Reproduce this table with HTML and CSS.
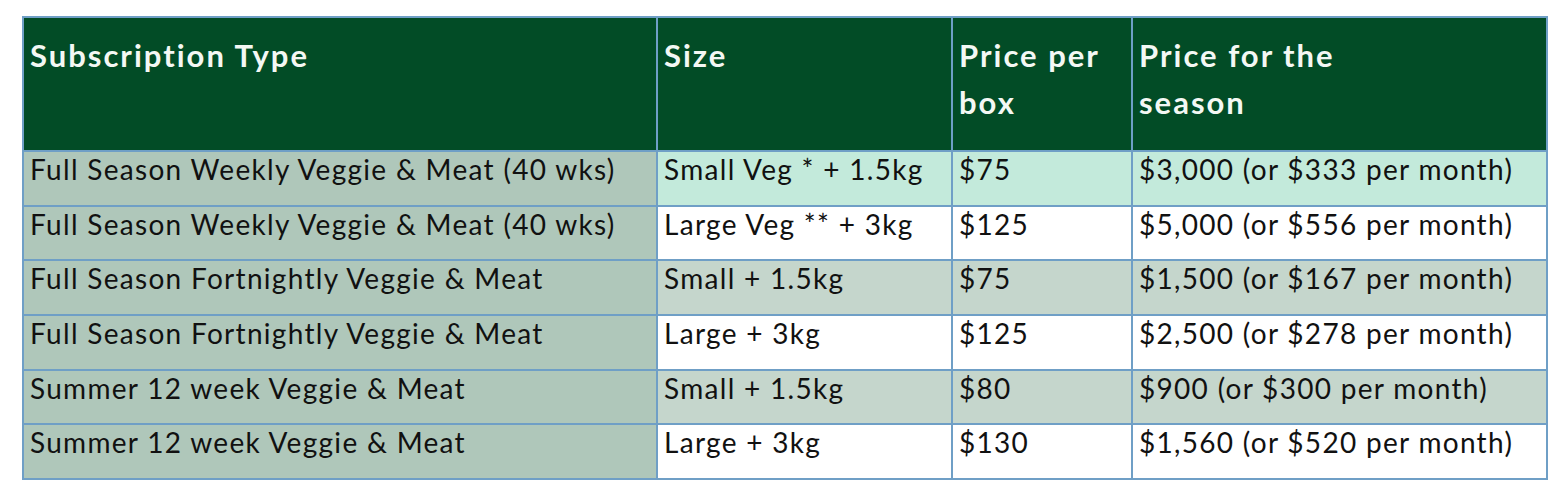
FILE: index.html
```html
<!DOCTYPE html>
<html>
<head>
<meta charset="utf-8">
<link rel="stylesheet" href="styles.css">
</head>
<body>
<div class="wrap">
<table class="plans">
  <colgroup>
    <col class="c1"><col class="c2"><col class="c3"><col class="c4">
  </colgroup>
  <thead>
    <tr class="head">
      <th>Subscription Type</th>
      <th>Size</th>
      <th>Price per<br>box</th>
      <th>Price for the<br>season</th>
    </tr>
  </thead>
  <tbody>
    <tr class="mint">
      <td class="type">Full Season Weekly Veggie &amp; Meat (40 wks)</td>
      <td>Small Veg * + 1.5kg</td>
      <td>$75</td>
      <td>$3,000 (or $333 per month)</td>
    </tr>
    <tr class="white">
      <td class="type">Full Season Weekly Veggie &amp; Meat (40 wks)</td>
      <td>Large Veg ** + 3kg</td>
      <td>$125</td>
      <td>$5,000 (or $556 per month)</td>
    </tr>
    <tr class="grey">
      <td class="type">Full Season Fortnightly Veggie &amp; Meat</td>
      <td>Small + 1.5kg</td>
      <td>$75</td>
      <td>$1,500 (or $167 per month)</td>
    </tr>
    <tr class="white">
      <td class="type">Full Season Fortnightly Veggie &amp; Meat</td>
      <td>Large + 3kg</td>
      <td>$125</td>
      <td>$2,500 (or $278 per month)</td>
    </tr>
    <tr class="grey">
      <td class="type">Summer 12 week Veggie &amp; Meat</td>
      <td>Small + 1.5kg</td>
      <td>$80</td>
      <td>$900 (or $300 per month)</td>
    </tr>
    <tr class="white">
      <td class="type">Summer 12 week Veggie &amp; Meat</td>
      <td>Large + 3kg</td>
      <td>$130</td>
      <td>$1,560 (or $520 per month)</td>
    </tr>
  </tbody>
</table>
</div>
</body>
</html>
```
FILE: styles.css
```css
html, body {
  margin: 0;
  padding: 0;
  background: #ffffff;
}
.wrap {
  padding: 16px 0 0 22px;
}
.plans {
  border-collapse: collapse;
  table-layout: fixed;
  width: 1524px;
  font-family: Lato, "Liberation Sans", sans-serif;
  color: #111111;
}
.c1 { width: 634px; }
.c2 { width: 295px; }
.c3 { width: 180px; }
.c4 { width: 415px; }
.plans th,
.plans td {
  border: 2px solid #6f9fc6;
  text-align: left;
  vertical-align: top;
  padding: 0 6px;
}
.head th {
  background: #024c26;
  color: #f4f8f4;
  font-weight: 700;
  font-size: 31px;
  letter-spacing: 2px;
  line-height: 47px;
  padding-top: 14px;
  height: 118px;
  box-sizing: content-box;
}
.plans td {
  font-size: 28px;
  letter-spacing: 1.3px;
  line-height: 31px;
  padding-top: 2px;
  height: 54.67px;
  box-sizing: border-box;
  white-space: nowrap;
}
.plans td.type {
  background: #afc7ba;
}
.mint td { background: #c3eadb; }
.white td { background: #ffffff; }
.grey td { background: #c5d6cc; }
```
